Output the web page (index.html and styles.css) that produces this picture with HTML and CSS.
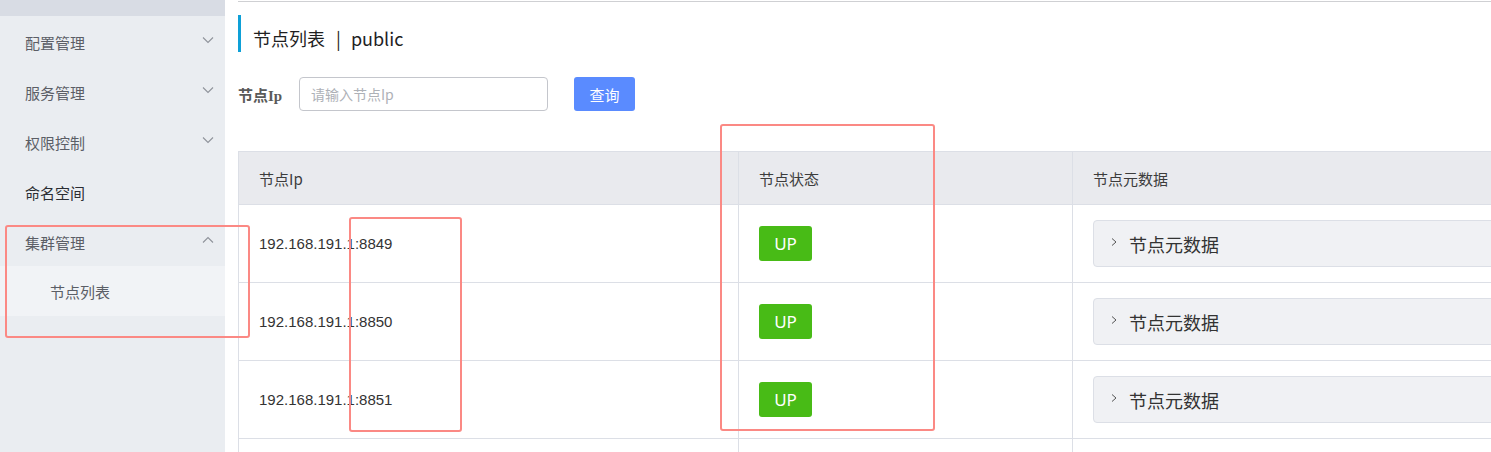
FILE: index.html
```html
<!DOCTYPE html>
<html lang="zh-CN">
<head>
<meta charset="utf-8">
<title>节点列表</title>
<link rel="stylesheet" href="styles.css">
</head>
<body>
<div class="layout">
  <aside class="sidebar">
    <div class="sidebar-top"></div>
    <div class="menu-item"><span>配置管理</span><svg class="chev" width="12" height="8" viewBox="0 0 12 8"><polyline points="1,1.5 6,6.5 11,1.5"/></svg></div>
    <div class="menu-item"><span>服务管理</span><svg class="chev" width="12" height="8" viewBox="0 0 12 8"><polyline points="1,1.5 6,6.5 11,1.5"/></svg></div>
    <div class="menu-item"><span>权限控制</span><svg class="chev" width="12" height="8" viewBox="0 0 12 8"><polyline points="1,1.5 6,6.5 11,1.5"/></svg></div>
    <div class="menu-item dark"><span>命名空间</span></div>
    <div class="menu-item"><span>集群管理</span><svg class="chev" width="12" height="8" viewBox="0 0 12 8"><polyline points="1,6.5 6,1.5 11,6.5"/></svg></div>
    <div class="submenu">
      <div class="sub-item">节点列表</div>
    </div>
  </aside>
  <main class="main">
    <div class="topline"></div>
    <h1 class="title">节点列表<span class="sep">|</span>public</h1>
    <div class="search">
      <label class="search-label">节点Ip</label>
      <input class="search-input" type="text" placeholder="请输入节点Ip">
      <button class="search-btn">查询</button>
    </div>
    <div class="table">
      <div class="cell head">节点Ip</div>
      <div class="cell head">节点状态</div>
      <div class="cell head">节点元数据</div>

      <div class="cell ip">192.168.191.1:8849</div>
      <div class="cell"><span class="tag">UP</span></div>
      <div class="cell"><div class="collapse"><svg class="rchev" width="8" height="10" viewBox="0 0 8 10"><polyline points="2,1.5 6,5 2,8.5"/></svg><span>节点元数据</span></div></div>

      <div class="cell ip">192.168.191.1:8850</div>
      <div class="cell"><span class="tag">UP</span></div>
      <div class="cell"><div class="collapse"><svg class="rchev" width="8" height="10" viewBox="0 0 8 10"><polyline points="2,1.5 6,5 2,8.5"/></svg><span>节点元数据</span></div></div>

      <div class="cell ip">192.168.191.1:8851</div>
      <div class="cell"><span class="tag">UP</span></div>
      <div class="cell"><div class="collapse"><svg class="rchev" width="8" height="10" viewBox="0 0 8 10"><polyline points="2,1.5 6,5 2,8.5"/></svg><span>节点元数据</span></div></div>

      <div class="cell ip"></div>
      <div class="cell"></div>
      <div class="cell"></div>
    </div>
  </main>
</div>
<div class="mark mark-a"></div>
<div class="mark mark-b"></div>
<div class="mark mark-c"></div>
</body>
</html>
```
FILE: styles.css
```css
html, body {
  margin: 0;
  padding: 0;
}
body {
  width: 1491px;
  height: 452px;
  overflow: hidden;
  position: relative;
  background: #fff;
  font-family: "Noto Sans CJK SC", "Noto Sans", sans-serif;
  color: #333;
}
.layout {
  display: flex;
  height: 452px;
}
.sidebar {
  width: 225px;
  flex: none;
  background: #eaedf1;
}
.sidebar-top {
  height: 16px;
  background: #d8dce4;
}
.menu-item {
  height: 50px;
  display: flex;
  align-items: center;
  justify-content: space-between;
  padding: 0 11px 0 25px;
  font-size: 15px;
  color: #5b5e66;
}
.menu-item span {
  position: relative;
  top: 1px;
}
.menu-item.dark {
  color: #2b2d33;
}
.chev {
  fill: none;
  stroke: #8f939b;
  stroke-width: 1.1;
  position: relative;
  top: -1px;
}
.submenu {
  background: #f1f3f6;
}
.sub-item {
  height: 50px;
  display: flex;
  align-items: center;
  padding-left: 50px;
  font-size: 15px;
  color: #5b5e66;
}
.main {
  flex: 1;
  min-width: 0;
  overflow: hidden;
  padding-left: 13px;
}
.topline {
  height: 1px;
  margin-top: 1px;
  background: #cfd0d3;
}
.title {
  margin: 13px 0 0 0;
  height: 37px;
  box-sizing: border-box;
  border-left: 3px solid #0ea0d7;
  padding: 14px 0 0 12px;
  line-height: 18px;
  font-size: 18px;
  font-weight: normal;
  color: #1f1f1f;
}
.sep {
  margin: 0 10px 0 11px;
}
.search {
  margin-top: 25px;
  display: flex;
  align-items: center;
  height: 34px;
}
.search-label {
  width: 61px;
  font-family: "Liberation Serif", "Noto Sans CJK SC", serif;
  font-weight: bold;
  font-size: 15px;
  color: #5a5a5a;
}
.search-input {
  width: 249px;
  height: 34px;
  box-sizing: border-box;
  border: 1px solid #c4c6cc;
  border-radius: 4px;
  padding: 0 11px;
  font-family: "Noto Sans CJK SC", sans-serif;
  font-size: 14px;
  color: #333;
  outline: none;
}
.search-input::placeholder {
  color: #aeb1b7;
}
.search-btn {
  margin-left: 26px;
  width: 61px;
  height: 34px;
  border: none;
  border-radius: 3px;
  background: #5a8bff;
  color: #fff;
  font-family: "Noto Sans CJK SC", sans-serif;
  font-size: 15px;
  padding: 0;
}
.table {
  margin-top: 40px;
  display: grid;
  grid-template-columns: 500px 334px 700px;
  grid-template-rows: 53px 78px 78px 78px 78px;
  border-top: 1px solid #dcdfe6;
  border-left: 1px solid #dcdfe6;
  width: 1534px;
}
.cell {
  box-sizing: border-box;
  border-right: 1px solid #dcdfe6;
  border-bottom: 1px solid #dcdfe6;
  padding: 0 20px;
  display: flex;
  align-items: center;
}
.cell.head {
  background: #e9eaee;
  font-size: 15px;
  color: #3c3c3c;
}
.cell.ip {
  font-family: "Liberation Sans", Arial, sans-serif;
  font-size: 15px;
  color: #333;
}
.tag {
  display: inline-flex;
  align-items: center;
  justify-content: center;
  width: 53px;
  height: 35px;
  border-radius: 3px;
  background: #48bb16;
  color: #fff;
  font-family: "Noto Sans", sans-serif;
  font-size: 17px;
}
.collapse {
  flex: 1;
  height: 47px;
  box-sizing: border-box;
  background: #f0f1f4;
  border: 1px solid #dcdfe6;
  border-radius: 4px;
  display: flex;
  align-items: center;
  padding-left: 16px;
  font-size: 18px;
  color: #333;
}
.rchev {
  fill: none;
  stroke: #555;
  stroke-width: 1;
  margin-right: 11px;
  position: relative;
  top: -2px;
}
.mark {
  position: absolute;
  border: 2px solid #fb8984;
  border-radius: 3px;
  box-sizing: border-box;
}
.mark-a {
  left: 5px;
  top: 225px;
  width: 245px;
  height: 113px;
}
.mark-b {
  left: 349px;
  top: 217px;
  width: 113px;
  height: 215px;
}
.mark-c {
  left: 720px;
  top: 124px;
  width: 215px;
  height: 307px;
}
```
